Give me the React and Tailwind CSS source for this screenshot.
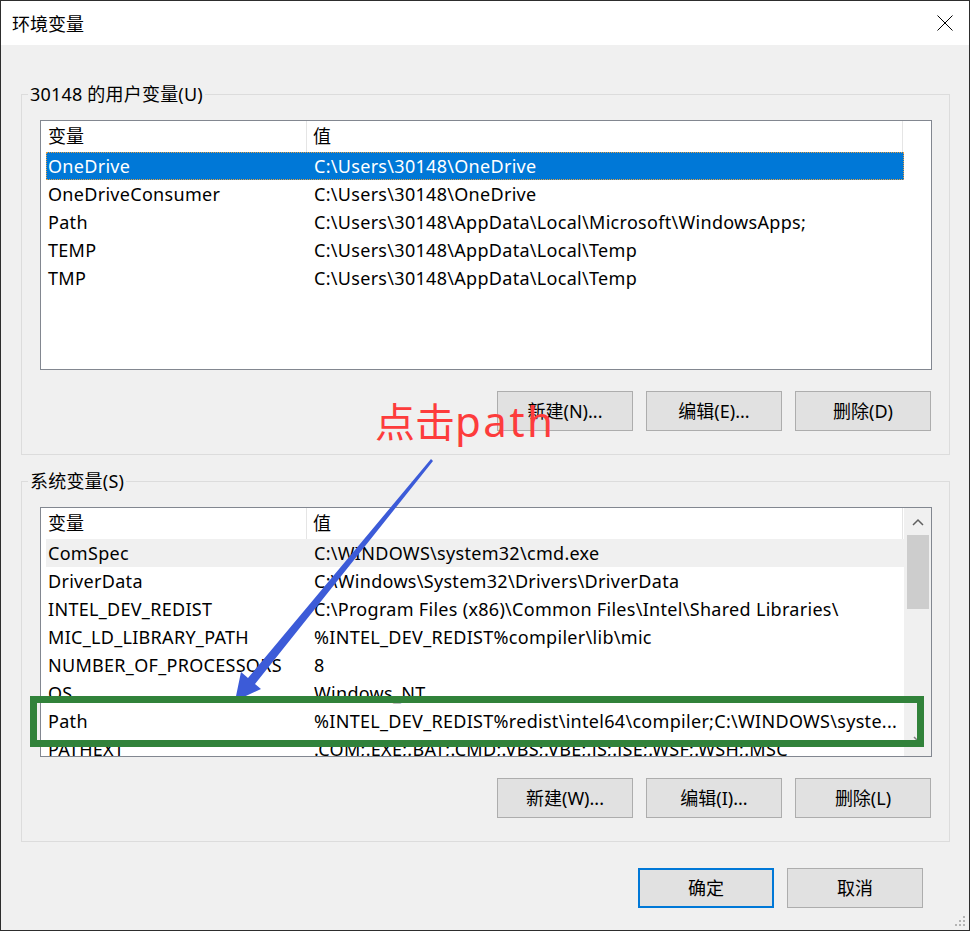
import React from "react";

const userVars = [
  ["OneDrive", "C:\\Users\\30148\\OneDrive"],
  ["OneDriveConsumer", "C:\\Users\\30148\\OneDrive"],
  ["Path", "C:\\Users\\30148\\AppData\\Local\\Microsoft\\WindowsApps;"],
  ["TEMP", "C:\\Users\\30148\\AppData\\Local\\Temp"],
  ["TMP", "C:\\Users\\30148\\AppData\\Local\\Temp"],
];

const systemVars = [
  ["ComSpec", "C:\\WINDOWS\\system32\\cmd.exe"],
  ["DriverData", "C:\\Windows\\System32\\Drivers\\DriverData"],
  ["INTEL_DEV_REDIST", "C:\\Program Files (x86)\\Common Files\\Intel\\Shared Libraries\\"],
  ["MIC_LD_LIBRARY_PATH", "%INTEL_DEV_REDIST%compiler\\lib\\mic"],
  ["NUMBER_OF_PROCESSORS", "8"],
  ["OS", "Windows_NT"],
  ["Path", "%INTEL_DEV_REDIST%redist\\intel64\\compiler;C:\\WINDOWS\\syste..."],
  ["PATHEXT", ".COM;.EXE;.BAT;.CMD;.VBS;.VBE;.JS;.JSE;.WSF;.WSH;.MSC"],
];

const Button = ({ children, primary }) => (
  <button
    type="button"
    className={
      primary
        ? "w-[136px] h-[40px] bg-[#e1e1e1] border-2 border-[#0078d7] text-[18px] text-black"
        : "w-[136px] h-[40px] bg-[#e1e1e1] border border-[#adadad] text-[18px] text-black"
    }
  >
    {children}
  </button>
);

const ListBox = ({ rows, selected, hover, scroll }) => (
  <div className="ml-[18px] w-[892px] h-[250px] border border-[#828790] bg-white overflow-hidden flex">
    <div className="w-[863px] shrink-0">
      {/* 表头 */}
      <div className="flex h-[31px]">
        <div className="w-[266px] pl-[7px] border-r border-[#e5e5e5] flex items-center">
          变量
        </div>
        <div className="w-[596px] pl-[6px] border-r border-[#e5e5e5] flex items-center">
          值
        </div>
      </div>
      {rows.map(([name, value], i) => (
        <div
          key={name}
          className={
            i === selected
              ? "ml-[5px] w-[858px] h-[28px] flex items-center pl-[1px] bg-[#0078d7] text-white border border-dotted border-[#e8a040]"
              : i === hover
              ? "ml-[5px] w-[858px] h-[28px] flex items-center pl-[2px] bg-[#f0f0f0]"
              : "ml-[5px] w-[858px] h-[28px] flex items-center pl-[2px]"
          }
        >
          <span className="w-[266px] shrink-0 whitespace-nowrap tracking-[0.3px]">{name}</span>
          <span className="whitespace-nowrap overflow-hidden tracking-[0.3px]">{value}</span>
        </div>
      ))}
    </div>
    {scroll && (
      <div className="flex-1 bg-[#f0f0f0] flex flex-col items-center">
        <div className="h-[27px] flex items-center justify-center">
          <svg width="12" height="8" viewBox="0 0 12 8">
            <path d="M1 7 L6 2 L11 7" fill="none" stroke="#606060" strokeWidth="1.5" />
          </svg>
        </div>
        <div className="w-[22px] h-[74px] bg-[#cdcdcd]" />
        <div className="flex-1" />
        <div className="h-[20px] flex items-start justify-center">
          <svg width="10" height="8" viewBox="0 0 10 8">
            <path d="M1 1 L5 5 L9 1" fill="none" stroke="#808080" strokeWidth="1.5" />
          </svg>
        </div>
      </div>
    )}
  </div>
);

const GroupBox = ({ label, children }) => (
  <fieldset className="ml-[20px] w-[929px] border border-[#dcdcdc] pb-[23px]">
    <legend className="ml-[6px] px-[2px] text-[18px] leading-[24px] tracking-[0.2px]">{label}</legend>
    {children}
  </fieldset>
);

export default function App() {
  return (
    <div className="relative w-[970px] h-[931px] border border-[#2d2d2d] bg-[#f0f0f0] flex flex-col overflow-hidden font-['Noto_Sans','Noto_Sans_CJK_SC',sans-serif] text-[18px] text-black">
      {/* 标题栏 */}
      <div className="h-[44px] bg-white flex items-center justify-between pl-[11px] pr-[16px]">
        <span className="font-['Noto_Sans_CJK_SC',sans-serif]">环境变量</span>
        <svg width="16" height="16" viewBox="0 0 16 16">
          <path d="M0.5 0.5 L15.5 15.5 M15.5 0.5 L0.5 15.5" stroke="#000" strokeWidth="1" />
        </svg>
      </div>

      <div className="pt-[37px]">
        <GroupBox label="30148 的用户变量(U)">
          <div className="mt-[14px]">
            <ListBox rows={userVars} selected={0} />
          </div>
          <div className="mt-[21px] flex justify-end gap-[13px] pr-[18px]">
            <Button>新建(N)...</Button>
            <Button>编辑(E)...</Button>
            <Button>删除(D)</Button>
          </div>
        </GroupBox>

        <div className="mt-[14px]">
          <GroupBox label="系统变量(S)">
            <div className="mt-[14px]">
              <ListBox rows={systemVars} hover={0} scroll />
            </div>
            <div className="mt-[21px] flex justify-end gap-[13px] pr-[18px]">
              <Button>新建(W)...</Button>
              <Button>编辑(I)...</Button>
              <Button>删除(L)</Button>
            </div>
          </GroupBox>
        </div>

        <div className="mt-[26px] flex justify-end gap-[13px] pr-[46px]">
          <Button primary>确定</Button>
          <Button>取消</Button>
        </div>
      </div>

      {/* 调整大小手柄 */}
      <svg className="absolute right-[3px] bottom-[3px]" width="12" height="12" viewBox="0 0 12 12">
        <rect x="9" y="1" width="2" height="2" fill="#b4b4b4" />
        <rect x="5" y="5" width="2" height="2" fill="#b4b4b4" />
        <rect x="9" y="5" width="2" height="2" fill="#b4b4b4" />
        <rect x="1" y="9" width="2" height="2" fill="#b4b4b4" />
        <rect x="5" y="9" width="2" height="2" fill="#b4b4b4" />
        <rect x="9" y="9" width="2" height="2" fill="#b4b4b4" />
      </svg>

      {/* 标注 */}
      <div className="absolute left-[374px] top-[397px] text-[40px] leading-[44px] text-[#fd3c3c] font-['Noto_Sans_CJK_SC',sans-serif] pointer-events-none whitespace-nowrap">
        点击<span className="font-['Noto_Sans',sans-serif] text-[42px] tracking-[2.5px]">path</span>
      </div>
      <svg className="absolute left-[-1px] top-[-1px] pointer-events-none" width="970" height="931" viewBox="0 0 970 931">
        <polygon
          points="431,459 433,461 255,684 261,689 235,701 241,672 248,678"
          fill="#3c5bd8"
        />
      </svg>
      <div className="absolute left-[29px] top-[695px] w-[894px] h-[51px] border-[7px] border-[#31823a] pointer-events-none" />
    </div>
  );
}
